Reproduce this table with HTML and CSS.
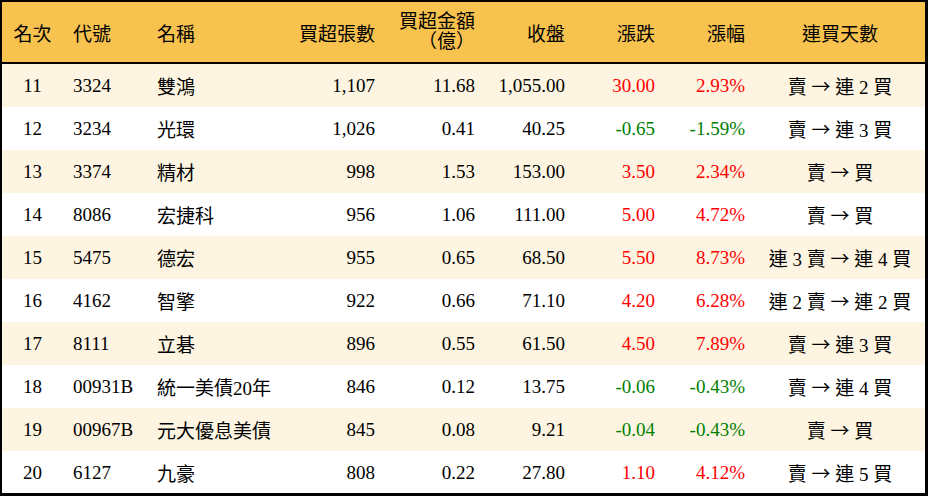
FILE: index.html
```html
<!DOCTYPE html>
<html lang="zh-Hant">
<head>
<meta charset="utf-8">
<title>買超排行</title>
<link rel="stylesheet" href="styles.css">
</head>
<body>
<div class="board">
  <div class="row head">
    <div class="c center">名次</div>
    <div class="c left">代號</div>
    <div class="c left">名稱</div>
    <div class="c right">買超張數</div>
    <div class="c right two">買超金額<br><span class="pl">（</span>億<span class="pr">）</span></div>
    <div class="c right">收盤</div>
    <div class="c right">漲跌</div>
    <div class="c right">漲幅</div>
    <div class="c center">連買天數</div>
  </div>
  <div class="row alt">
    <div class="c center">11</div><div class="c left">3324</div><div class="c left">雙鴻</div>
    <div class="c right">1,107</div><div class="c right">11.68</div><div class="c right">1,055.00</div>
    <div class="c right up">30.00</div><div class="c right up">2.93%</div><div class="c center">賣 <span class="arr">→</span> 連 2 買</div>
  </div>
  <div class="row">
    <div class="c center">12</div><div class="c left">3234</div><div class="c left">光環</div>
    <div class="c right">1,026</div><div class="c right">0.41</div><div class="c right">40.25</div>
    <div class="c right down">-0.65</div><div class="c right down">-1.59%</div><div class="c center">賣 <span class="arr">→</span> 連 3 買</div>
  </div>
  <div class="row alt">
    <div class="c center">13</div><div class="c left">3374</div><div class="c left">精材</div>
    <div class="c right">998</div><div class="c right">1.53</div><div class="c right">153.00</div>
    <div class="c right up">3.50</div><div class="c right up">2.34%</div><div class="c center">賣 <span class="arr">→</span> 買</div>
  </div>
  <div class="row">
    <div class="c center">14</div><div class="c left">8086</div><div class="c left">宏捷科</div>
    <div class="c right">956</div><div class="c right">1.06</div><div class="c right">111.00</div>
    <div class="c right up">5.00</div><div class="c right up">4.72%</div><div class="c center">賣 <span class="arr">→</span> 買</div>
  </div>
  <div class="row alt">
    <div class="c center">15</div><div class="c left">5475</div><div class="c left">德宏</div>
    <div class="c right">955</div><div class="c right">0.65</div><div class="c right">68.50</div>
    <div class="c right up">5.50</div><div class="c right up">8.73%</div><div class="c center">連 3 賣 <span class="arr">→</span> 連 4 買</div>
  </div>
  <div class="row">
    <div class="c center">16</div><div class="c left">4162</div><div class="c left">智擎</div>
    <div class="c right">922</div><div class="c right">0.66</div><div class="c right">71.10</div>
    <div class="c right up">4.20</div><div class="c right up">6.28%</div><div class="c center">連 2 賣 <span class="arr">→</span> 連 2 買</div>
  </div>
  <div class="row alt">
    <div class="c center">17</div><div class="c left">8111</div><div class="c left">立碁</div>
    <div class="c right">896</div><div class="c right">0.55</div><div class="c right">61.50</div>
    <div class="c right up">4.50</div><div class="c right up">7.89%</div><div class="c center">賣 <span class="arr">→</span> 連 3 買</div>
  </div>
  <div class="row">
    <div class="c center">18</div><div class="c left">00931B</div><div class="c left">統一美債20年</div>
    <div class="c right">846</div><div class="c right">0.12</div><div class="c right">13.75</div>
    <div class="c right down">-0.06</div><div class="c right down">-0.43%</div><div class="c center">賣 <span class="arr">→</span> 連 4 買</div>
  </div>
  <div class="row alt">
    <div class="c center">19</div><div class="c left">00967B</div><div class="c left">元大優息美債</div>
    <div class="c right">845</div><div class="c right">0.08</div><div class="c right">9.21</div>
    <div class="c right down">-0.04</div><div class="c right down">-0.43%</div><div class="c center">賣 <span class="arr">→</span> 買</div>
  </div>
  <div class="row">
    <div class="c center">20</div><div class="c left">6127</div><div class="c left">九豪</div>
    <div class="c right">808</div><div class="c right">0.22</div><div class="c right">27.80</div>
    <div class="c right up">1.10</div><div class="c right up">4.12%</div><div class="c center">賣 <span class="arr">→</span> 連 5 買</div>
  </div>
</div>
</body>
</html>
```
FILE: styles.css
```css
html, body {
  margin: 0;
  padding: 0;
  background: #ffffff;
}
body {
  font-family: "Liberation Serif", "Noto Sans CJK TC", serif;
  font-size: 19px;
  color: #000000;
  text-spacing-trim: space-all;
}
.board {
  box-sizing: border-box;
  width: 928px;
  height: 496px;
  border: 2px solid #000000;
  border-right-width: 3px;
  border-bottom-width: 3px;
  background: #ffffff;
}
.row {
  display: grid;
  grid-template-columns: 61px 84px 138px 100px 100px 90px 90px 90px 1fr;
  height: 43px;
  align-items: center;
}
.row.head {
  height: 60px;
  background: #f8c24f;
  border-bottom: 2px solid #000000;
}
.row.alt {
  background: #fdf5e1;
}
.c {
  white-space: nowrap;
}
.center { text-align: center; }
.left { text-align: left; padding-left: 10px; }
.right { text-align: right; padding-right: 10px; }
.two {
  line-height: 20px;
}
.pl, .pr {
  display: inline-block;
  width: 19px;
}
.pl { text-align: right; }
.pr { text-align: left; }
.arr {
  font-family: "Noto Sans CJK TC", sans-serif;
}
.up { color: #ff0000; }
.down { color: #008000; }
```
